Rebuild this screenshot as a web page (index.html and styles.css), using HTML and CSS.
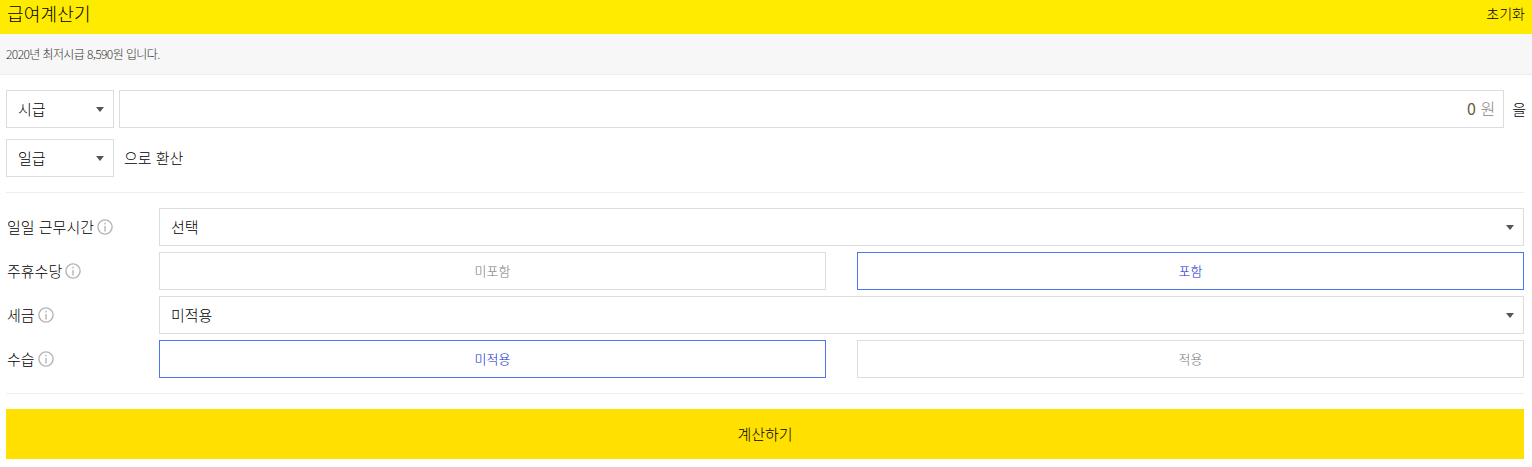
FILE: index.html
```html
<!DOCTYPE html>
<html lang="ko">
<head>
  <meta charset="UTF-8" />
  <title>급여계산기</title>
  <link rel="stylesheet" href="styles.css">
</head>
<body>
  <header class="top-bar">
    <h1>급여계산기</h1>
    <button class="reset-button">초기화</button>
  </header>

  <div class="notice">2020년 최저시급 8,590원 입니다.</div>

  <form class="calc-form">
    <div class="convert-row">
      <div class="select-box small"><span>시급</span><i class="caret"></i></div>
      <div class="amount-box"><b>0</b> 원</div>
      <span class="suffix">을</span>
    </div>
    <div class="convert-row second">
      <div class="select-box small"><span>일급</span><i class="caret"></i></div>
      <span class="suffix wide">으로 환산</span>
    </div>

    <div class="options">
      <div class="option-row">
        <div class="option-label">일일 근무시간
          <svg class="info" viewBox="0 0 16 16"><circle cx="8" cy="8" r="7.1"/><path d="M8 3.8v1.8M8 7v5.4"/></svg>
        </div>
        <div class="select-box"><span>선택</span><i class="caret"></i></div>
      </div>
      <div class="option-row">
        <div class="option-label">주휴수당
          <svg class="info" viewBox="0 0 16 16"><circle cx="8" cy="8" r="7.1"/><path d="M8 3.8v1.8M8 7v5.4"/></svg>
        </div>
        <div class="toggle-pair">
          <div class="toggle">미포함</div>
          <div class="toggle active">포함</div>
        </div>
      </div>
      <div class="option-row">
        <div class="option-label">세금
          <svg class="info" viewBox="0 0 16 16"><circle cx="8" cy="8" r="7.1"/><path d="M8 3.8v1.8M8 7v5.4"/></svg>
        </div>
        <div class="select-box"><span>미적용</span><i class="caret"></i></div>
      </div>
      <div class="option-row">
        <div class="option-label">수습
          <svg class="info" viewBox="0 0 16 16"><circle cx="8" cy="8" r="7.1"/><path d="M8 3.8v1.8M8 7v5.4"/></svg>
        </div>
        <div class="toggle-pair">
          <div class="toggle active">미적용</div>
          <div class="toggle">적용</div>
        </div>
      </div>
    </div>

    <button type="button" class="calc-button">계산하기</button>
  </form>
</body>
</html>
```

FILE: styles.css
```css
* {
  box-sizing: border-box;
}

body {
  margin: 0;
  font-family: "Noto Sans CJK KR", "Noto Sans", sans-serif;
  font-weight: 300;
  font-size: 15px;
  color: #000;
  background-color: #fff;
}

.top-bar {
  display: flex;
  justify-content: space-between;
  align-items: center;
  height: 34px;
  padding: 0 7px 8px 7px;
  background-color: #ffeb00;
}

.top-bar h1 {
  margin: 0;
  font-size: 18px;
  letter-spacing: 0.2px;
  font-weight: 300;
  line-height: 24px;
  color: #000;
}

.reset-button {
  padding: 0;
  border: none;
  background: none;
  font: inherit;
  font-size: 14px;
  line-height: 20px;
  color: #000;
}

.notice {
  height: 41px;
  padding-left: 6px;
  line-height: 39px;
  font-size: 12px;
  letter-spacing: -0.6px;
  color: #333;
  background-color: #f7f7f7;
  border-bottom: 1px solid #eee;
}

.calc-form {
  padding: 15px 8px 0 6px;
}

.convert-row {
  display: flex;
  align-items: center;
  height: 38px;
  gap: 5px;
}

.convert-row.second {
  margin-top: 11px;
  gap: 10px;
}

.select-box {
  display: flex;
  flex: 1;
  justify-content: space-between;
  align-items: center;
  height: 38px;
  padding: 0 9px 2px 11px;
  border: 1px solid #ddd;
  background-color: #fff;
}

.select-box.small {
  flex: none;
  width: 108px;
}

.caret {
  width: 0;
  height: 0;
  margin-top: 2px;
  border-left: 4px solid transparent;
  border-right: 4px solid transparent;
  border-top: 5px solid #555;
}

.amount-box {
  flex: 1;
  height: 38px;
  padding-right: 8px;
  line-height: 35px;
  text-align: right;
  font-size: 16px;
  color: #888;
  border: 1px solid #ddd;
}

.amount-box b {
  font-weight: 400;
  color: #6b5a45;
}

.suffix {
  margin-left: 3px;
  margin-right: -2px;
  padding-bottom: 2px;
}

.suffix.wide {
  margin-left: 0;
}

.options {
  display: flex;
  flex-direction: column;
  gap: 6px;
  margin-top: 15px;
  padding: 15px 0;
  border-top: 1px solid #eee;
  border-bottom: 1px solid #eee;
}

.option-row {
  display: flex;
  align-items: center;
  height: 38px;
}

.option-label {
  display: flex;
  flex: none;
  align-items: center;
  gap: 3px;
  width: 153px;
  padding-left: 1px;
  padding-bottom: 1px;
}

.info {
  width: 16px;
  height: 16px;
  margin-top: 1px;
  fill: none;
  stroke: #b5b5b5;
  stroke-width: 1.4;
}

.toggle-pair {
  display: flex;
  flex: 1;
  gap: 31px;
}

.toggle {
  flex: 1;
  height: 38px;
  line-height: 36px;
  text-align: center;
  font-size: 13px;
  color: #777;
  border: 1px solid #ddd;
}

.toggle.active {
  color: #0a2bd0;
  border-color: #4f74ee;
}

.calc-button {
  display: block;
  width: 100%;
  height: 50px;
  margin-top: 15px;
  padding-bottom: 2px;
  border: none;
  background-color: #ffe000;
  font: inherit;
  color: #000;
}
```
